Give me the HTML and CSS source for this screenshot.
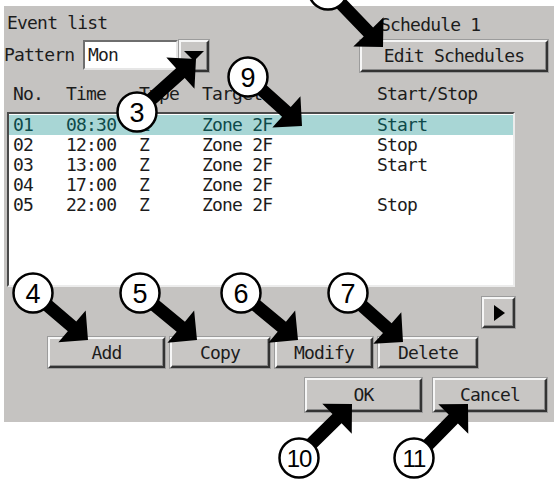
FILE: index.html
```html
<!DOCTYPE html>
<html lang="en">
<head>
    <meta charset="UTF-8">
    <title>Event list</title>
    <link rel="stylesheet" href="styles.css">
</head>
<body>
    <div class="panel">
        <div class="top">
            <div class="top-left">
                <div class="title">Event list</div>
                <div class="pattern-row">
                    <span class="pattern-label">Pattern</span>
                    <div class="combo-field">Mon</div>
                    <div class="btn combo-btn"><span class="tri-down"></span></div>
                </div>
            </div>
            <div class="top-right">
                <div class="schedule-name">Schedule 1</div>
                <div class="btn btn-edit">Edit Schedules</div>
            </div>
        </div>

        <div class="cols list-head">
            <span>No.</span><span>Time</span><span>Type</span><span>Target</span><span>Start/Stop</span>
        </div>

        <div class="event-list">
            <div class="cols row selected"><span>01</span><span>08:30</span><span>Z</span><span>Zone 2F</span><span>Start</span></div>
            <div class="cols row"><span>02</span><span>12:00</span><span>Z</span><span>Zone 2F</span><span>Stop</span></div>
            <div class="cols row"><span>03</span><span>13:00</span><span>Z</span><span>Zone 2F</span><span>Start</span></div>
            <div class="cols row"><span>04</span><span>17:00</span><span>Z</span><span>Zone 2F</span><span></span></div>
            <div class="cols row"><span>05</span><span>22:00</span><span>Z</span><span>Zone 2F</span><span>Stop</span></div>
        </div>

        <div class="pager">
            <div class="btn btn-next"><span class="tri-right"></span></div>
        </div>

        <div class="actions">
            <div class="btn btn-add">Add</div>
            <div class="btn btn-copy">Copy</div>
            <div class="btn btn-modify">Modify</div>
            <div class="btn btn-delete">Delete</div>
        </div>

        <div class="dialog-actions">
            <div class="btn btn-ok">OK</div>
            <div class="btn btn-cancel">Cancel</div>
        </div>
    </div>

    <!-- numbered callouts drawn over the dialog -->
    <svg class="callouts" width="554" height="481" viewBox="0 0 554 481">
        <g class="arrows">
            <path transform="translate(383 47) rotate(46)" d="M0 0L-21 -21V-6.5H-79V6.5H-21V21Z"/>
            <path transform="translate(196 59) rotate(-42)" d="M0 0L-21 -21V-6.5H-79V6.5H-21V21Z"/>
            <path transform="translate(302 126) rotate(42)" d="M0 0L-21 -21V-6.5H-73V6.5H-21V21Z"/>
            <path transform="translate(88 340) rotate(40.5)" d="M0 0L-21 -21V-6.5H-72V6.5H-21V21Z"/>
            <path transform="translate(197 340) rotate(39.5)" d="M0 0L-21 -21V-6.5H-74V6.5H-21V21Z"/>
            <path transform="translate(298 340) rotate(39.5)" d="M0 0L-21 -21V-6.5H-74V6.5H-21V21Z"/>
            <path transform="translate(403 342) rotate(41.7)" d="M0 0L-21 -21V-6.5H-74V6.5H-21V21Z"/>
            <path transform="translate(352 404) rotate(-44.5)" d="M0 0L-21 -21V-6.5H-77V6.5H-21V21Z"/>
            <path transform="translate(468 404) rotate(-45.5)" d="M0 0L-21 -21V-6.5H-76V6.5H-21V21Z"/>
        </g>
        <g class="marks">
            <circle cx="328" cy="-10" r="19.5"/><text x="328" y="0">8</text>
            <circle cx="137" cy="112" r="19.5"/><text x="137" y="122">3</text>
            <circle cx="248" cy="77" r="19.5"/><text x="248" y="87">9</text>
            <circle cx="33" cy="293" r="19.5"/><text x="33" y="303">4</text>
            <circle cx="140" cy="293" r="19.5"/><text x="140" y="303">5</text>
            <circle cx="241" cy="293" r="19.5"/><text x="241" y="303">6</text>
            <circle cx="348" cy="293" r="19.5"/><text x="348" y="303">7</text>
            <circle cx="299" cy="458" r="19.5"/><text class="two-digit" x="299" y="467">10</text>
            <circle cx="414" cy="458" r="19.5"/><text class="two-digit" x="414" y="467">11</text>
        </g>
    </svg>
</body>
</html>
```

FILE: styles.css
```css
body { margin: 0; padding: 6px 0 0 4px; min-height: 481px; box-sizing: border-box; background: #fff; font-family: "DejaVu Sans Mono", monospace; font-size: 18px; letter-spacing: -0.8px; color: #1c1c1c; position: relative; }

.panel { width: 550px; height: 416px; background: #c5c3c1; line-height: 20px; }

.top { display: flex; justify-content: space-between; padding-right: 6px; }
.top-left { padding-top: 7px; }
.title { padding-left: 3px; }
.pattern-row { display: flex; align-items: flex-start; margin-top: 7px; }
.pattern-label { width: 79px; padding-top: 5px; }
.combo-field { width: 88px; height: 26px; padding-left: 3px; background: #fff; border: 2px solid; border-color: #6e6e6e #e6e6e6 #e6e6e6 #6e6e6e; line-height: 26px; }
.combo-btn { width: 30px; height: 32px; margin-left: 1px; }
.tri-down { width: 0; height: 0; border-left: 10px solid transparent; border-right: 10px solid transparent; border-top: 10px solid #000; }

.top-right { padding-top: 9px; }
.schedule-name { padding-left: 20px; }
.btn-edit { width: 188px; height: 32px; margin-top: 5px; }

.btn { box-sizing: border-box; display: flex; align-items: center; justify-content: center; background: #c8c6c4; border: 2px solid; border-color: #f6f6f6 #333 #333 #f6f6f6; box-shadow: inset -1px -1px #8a8a8a, 0 0 0 1px #9c9c9c; }

.cols { display: grid; grid-template-columns: 53px 73px 63px 175px 1fr; }
.list-head { margin: 12px 0 0 9px; }

.event-list { margin: 8px 0 0 3px; width: 508px; height: 175px; box-sizing: border-box; padding-top: 1px; background: #fff; border: 2px solid; border-color: #4a4a4a #ececec #ececec #4a4a4a; }
.row { height: 20px; padding-left: 4px; }
.row.selected { background: #a8d6d5; color: #0e4a4a; }

.pager { display: flex; justify-content: flex-end; padding-right: 39px; margin-top: 10px; }
.btn-next { width: 33px; height: 31px; }
.tri-right { width: 0; height: 0; border-top: 8px solid transparent; border-bottom: 8px solid transparent; border-left: 11px solid #000; margin-left: 2px; }

.actions { display: flex; gap: 5px; padding-left: 44px; margin-top: 9px; }
.actions .btn { height: 31px; }
.btn-add { width: 117px; }
.btn-copy { width: 100px; }
.btn-modify { width: 98px; }
.btn-delete { width: 100px; }

.dialog-actions { display: flex; justify-content: flex-end; gap: 11px; padding-right: 7px; margin-top: 10px; }
.dialog-actions .btn { height: 34px; }
.btn-ok { width: 117px; }
.btn-cancel { width: 114px; }

.callouts { position: absolute; top: 0; left: 0; pointer-events: none; }
.arrows path { fill: #000; }
.marks circle { fill: #fff; stroke: #000; stroke-width: 2.5; }
.marks text { font-family: "Liberation Sans", Arial, sans-serif; font-size: 27px; letter-spacing: 0; text-anchor: middle; fill: #000; }
.marks .two-digit { font-size: 24px; letter-spacing: -1px; }
```
